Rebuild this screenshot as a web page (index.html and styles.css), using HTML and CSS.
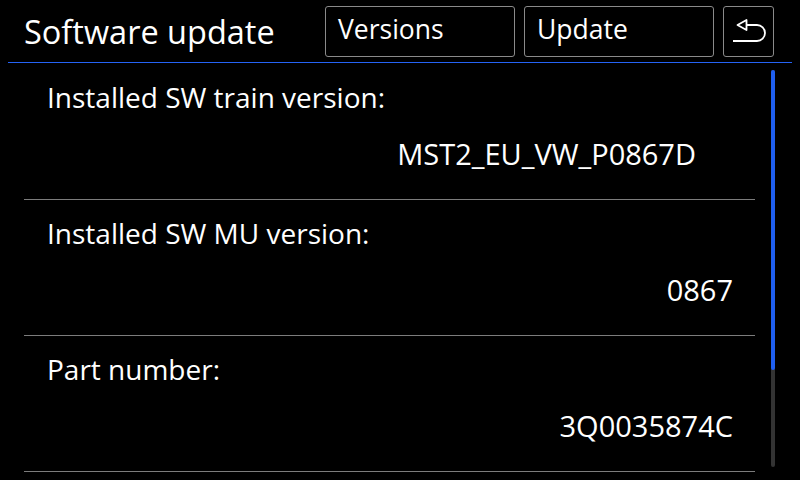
FILE: index.html
```html
<!DOCTYPE html>
<html lang="en">
<head>
  <meta charset="UTF-8">
  <title>Software update</title>
  <link rel="stylesheet" href="styles.css">
</head>
<body>
  <header class="topbar">
    <div class="title">Software update</div>
    <div class="tabs">
      <button class="btn">Versions</button>
      <button class="btn">Update</button>
      <button class="btn back" aria-label="Back">
        <svg width="48" height="48" viewBox="0 0 48 48">
          <path d="M12.5 17 L21.5 12 L21.5 22 Z" fill="none" stroke="#fff" stroke-width="1.8" stroke-linejoin="round"/>
          <path d="M21.5 17 H32 A8 8 0 0 1 32 33 H8" fill="none" stroke="#fff" stroke-width="1.8"/>
        </svg>
      </button>
    </div>
  </header>
  <main class="content">
    <div class="list">
      <div class="row">
        <div class="label">Installed SW train version:</div>
        <div class="value value-train">MST2_EU_VW_P0867D</div>
      </div>
      <div class="row">
        <div class="label">Installed SW MU version:</div>
        <div class="value">0867</div>
      </div>
      <div class="row">
        <div class="label">Part number:</div>
        <div class="value">3Q0035874C</div>
      </div>
    </div>
    <div class="scrollbar">
      <div class="thumb"></div>
    </div>
  </main>
</body>
</html>
```

FILE: styles.css
```css
body {
  margin: 0;
  background: #000;
  color: #fff;
  font-family: "Open Sans", "DejaVu Sans", sans-serif;
  width: 800px;
  height: 480px;
  overflow: hidden;
}
.topbar {
  display: flex;
  align-items: flex-start;
  justify-content: space-between;
  height: 62px;
  margin: 0 8px;
  border-bottom: 1px solid #2563f5;
}
.title {
  font-size: 32.5px;
  padding: 11px 0 0 16px;
  line-height: 42px;
}
.tabs {
  display: flex;
  gap: 9px;
  padding-top: 6px;
  margin-right: 18px;
}
.btn {
  height: 51px;
  width: 190px;
  background: #000;
  color: #fff;
  border: 1px solid #8a8a8a;
  border-radius: 3px;
  font-family: inherit;
  font-size: 26.5px;
  text-align: left;
  padding: 0 0 6px 12px;
  box-sizing: border-box;
}
.btn.back {
  width: 51px;
  padding: 0;
  display: flex;
  align-items: center;
  justify-content: center;
}
.content {
  display: flex;
  padding-left: 24px;
}
.list {
  width: 731px;
  padding-top: 1px;
}
.row {
  height: 135px;
  border-bottom: 1px solid #7c7c7c;
  box-sizing: content-box;
}
.label {
  font-size: 28px;
  padding: 14px 0 0 23px;
  line-height: 38px;
}
.value {
  font-size: 29px;
  text-align: right;
  padding: 18px 22px 0 0;
  line-height: 40px;
}
.value-train {
  padding-right: 59px;
}
.scrollbar {
  margin: 7px 0 0 16px;
  width: 4px;
  height: 397px;
  background: #333;
  border-radius: 2px;
}
.thumb {
  height: 300px;
  background: #1f5ff0;
  border-radius: 2px;
}
```
